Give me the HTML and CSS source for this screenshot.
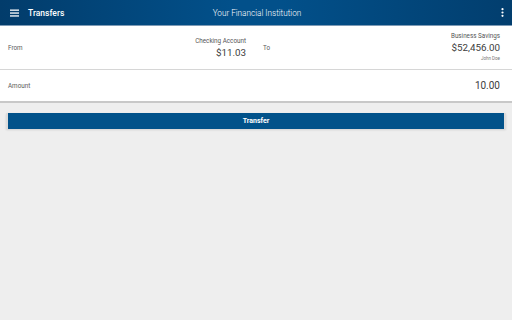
FILE: index.html
```html
<!DOCTYPE html>
<html>
<head>
<meta charset="utf-8">
<link rel="stylesheet" href="styles.css">
</head>
<body>
<header class="appbar">
  <div class="left">
    <svg class="menu" width="9" height="8" viewBox="0 0 9 8"><rect x="0" y="0.5" width="9" height="1.3" fill="#fff"/><rect x="0" y="3.4" width="9" height="1.3" fill="#fff"/><rect x="0" y="6.3" width="9" height="1.3" fill="#fff"/></svg>
    <span class="title">Transfers</span>
  </div>
  <div class="center">Your Financial Institution</div>
  <div class="right">
    <svg width="3" height="9" viewBox="0 0 3 9"><circle cx="1.5" cy="1.2" r="1.1" fill="#fff"/><circle cx="1.5" cy="4.5" r="1.1" fill="#fff"/><circle cx="1.5" cy="7.8" r="1.1" fill="#fff"/></svg>
  </div>
</header>
<main>
  <section class="card">
    <div class="row accounts">
      <div class="half">
        <span class="label">From</span>
        <div class="acct">
          <div class="acct-name">Checking Account</div>
          <div class="acct-bal">$11.03</div>
        </div>
      </div>
      <div class="half">
        <span class="label to">To</span>
        <div class="acct">
          <div class="acct-name">Business Savings</div>
          <div class="acct-bal">$52,456.00</div>
          <div class="acct-owner">John Doe</div>
        </div>
      </div>
    </div>
    <div class="row amount">
      <span class="label">Amount</span>
      <span class="amount-val">10.00</span>
    </div>
  </section>
  <div class="btn-wrap">
    <button class="btn">Transfer</button>
  </div>
</main>
</body>
</html>
```
FILE: styles.css
```css
html, body {
  margin: 0;
  padding: 0;
}
body {
  width: 512px;
  height: 320px;
  background: #eeeeee;
  font-family: Roboto, "Noto Sans", sans-serif;
  overflow: hidden;
}
.appbar {
  height: 25px;
  display: flex;
  align-items: center;
  justify-content: space-between;
  background: linear-gradient(to right, #023c6b 0%, #02508a 45%, #02508a 55%, #023e6e 100%);
  border-bottom: 1px solid #7d9ab5;
  color: #fff;
}
.left {
  display: flex;
  align-items: center;
  padding-left: 10px;
  width: 150px;
}
.menu {
  margin-right: 9px;
}
.title {
  font-size: 8.5px;
  font-weight: 500;
}
.center {
  font-size: 8.2px;
  font-weight: 300;
  color: #ffffff;
}
.right {
  width: 150px;
  display: flex;
  justify-content: flex-end;
  padding-right: 8px;
}
.card {
  background: #fff;
  border-bottom: 2px solid #c8c8c8;
}
.row {
  display: flex;
  align-items: center;
}
.accounts {
  height: 43px;
  border-bottom: 1px solid #d6d6d6;
}
.half {
  flex: 1;
  display: flex;
  align-items: center;
  justify-content: space-between;
  padding: 0 8px;
}
.half + .half {
  padding-right: 12px;
}
.label {
  font-size: 6.3px;
  color: #5a5a5a;
}
.label.to {
  padding-left: 1px;
}
.acct {
  text-align: right;
  color: #555;
}
.acct-name {
  font-size: 6.3px;
  line-height: 9px;
}
.acct-bal {
  font-size: 9.8px;
  line-height: 13px;
  color: #3c3c3c;
}
.acct-owner {
  font-size: 4.5px;
  line-height: 10px;
  color: #777;
}
.amount {
  height: 31px;
  justify-content: space-between;
  padding: 0 12px 0 8px;
}
.amount-val {
  font-size: 10px;
  color: #3c3c3c;
}
.btn-wrap {
  padding: 10px 6px 0 6px;
}
.btn {
  display: block;
  width: 100%;
  height: 16px;
  margin: 0;
  padding: 0;
  background: #01528a;
  color: #fff;
  border: none;
  border-left: 2px solid #dcdcdc;
  border-right: 2px solid #dcdcdc;
  box-shadow: 0 1px 2px rgba(0,0,0,0.12);
  font-family: Roboto, "Noto Sans", sans-serif;
  font-size: 7px;
  font-weight: 700;
}
```
